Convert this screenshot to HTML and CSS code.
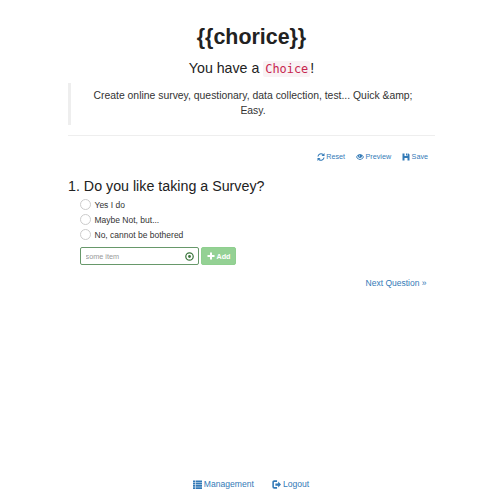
FILE: index.html
```
<!DOCTYPE html>
<html lang="en">
<head>
<meta charset="utf-8">
<title>{{chorice}}</title>
<link rel="stylesheet" href="styles.css">
</head>
<body>
<main class="container">
  <header class="intro">
    <h1>{{chorice}}</h1>
    <h2>You have a <code>Choice</code>!</h2>
    <blockquote>Create online survey, questionary, data collection, test... Quick &amp;amp; Easy.</blockquote>
  </header>
  <nav class="toolbar">
    <a href="#"><svg class="icon" viewBox="0 0 16 16"><path d="M2 7a6 6 0 0 1 10-4M14 9A6 6 0 0 1 4 13" fill="none" stroke="currentColor" stroke-width="2.2"/><path d="M15 0v6H9zM1 16v-6h6z"/></svg><span>Reset</span></a>
    <a href="#"><svg class="icon" viewBox="0 0 16 16"><path fill-rule="evenodd" d="M0 8Q3.500 2 8 2T16 8Q12.500 14 8 14T0 8zM2 8Q4 12 8 12T14 8Q13 6 11.800 5A4 4 0 1 1 4.200 5Q3 6 2 8zM6 5v2h2V5z"/></svg><span>Preview</span></a>
    <a href="#"><svg class="icon" viewBox="0 0 16 16"><path d="M1 1h4v5h6V1h2l2 2v12h-4V10H5v5H1zM8 1h2v4H8z"/></svg><span>Save</span></a>
  </nav>
  <section class="question">
    <h3>1. Do you like taking a Survey?</h3>
    <div class="options">
      <label><input type="radio" name="answer"><span>Yes I do</span></label>
      <label><input type="radio" name="answer"><span>Maybe Not, but...</span></label>
      <label><input type="radio" name="answer"><span>No, cannot be bothered</span></label>
    </div>
    <form class="add-item">
      <div class="field"><input type="text" placeholder="some item"><svg class="record" viewBox="0 0 16 16"><circle cx="8" cy="8" r="6.600" fill="none" stroke="currentColor" stroke-width="2.200"/><circle cx="8" cy="8" r="2.500"/></svg></div>
      <button type="button"><svg class="icon" viewBox="0 0 16 16"><path d="M6 1h4v5h5v4h-5v5H6v-5H1V6h5z"/></svg><span>Add</span></button>
    </form>
  </section>
  <div class="next"><a href="#">Next Question »</a></div>
  <footer>
    <a href="#"><svg class="icon" viewBox="0 0 16 16"><path d="M0 1h4v3H0zM5 1h11v3H5zM0 5h4v3H0zM5 5h11v3H5zM0 9h4v3H0zM5 9h11v3H5zM0 13h4v3H0zM5 13h11v3H5z"/></svg><span>Management</span></a>
    <a href="#"><svg class="icon" viewBox="0 0 16 16"><path d="M9 2H4Q2 2 2 4v8q0 2 2 2h5" fill="none" stroke="currentColor" stroke-width="2.800"/><path d="M6 6h5V2.500L16 8l-5 5.500V10H6z"/></svg><span>Logout</span></a>
  </footer>
</main>
</body>
</html>
```
FILE: styles.css
```
* { box-sizing: border-box; }
body {
  margin: 0;
  background: #fff;
  color: #333;
  font-family: "Liberation Sans", Arial, sans-serif;
  font-size: 8.5px;
}
a { color: #337ab7; text-decoration: none; }
svg { fill: currentColor; }
.container {
  width: 368px;
  height: 500px;
  margin: 0 auto 0 68px;
  display: flex;
  flex-direction: column;
}
.intro {
  height: 136px;
  width: 367px;
  border-bottom: 1px solid #eee;
  text-align: center;
}
h1, h2, h3 { margin: 0; font-weight: 400; color: #222; }
h1 { padding-top: 24px; font-size: 21.4px; line-height: 27px; font-weight: 700; }
h2 { margin-top: 9px; font-size: 14.2px; line-height: 17px; }
code {
  padding: 1px 2px;
  border-radius: 2px;
  background: #f9f2f4;
  color: #c7254e;
  font-family: "DejaVu Sans Mono", monospace;
  font-size: 11.9px;
}
blockquote {
  margin: 5px 0 0;
  height: 42px;
  padding: 5px 12px;
  border-left: 3px solid #eee;
  font-size: 10.4px;
  line-height: 15px;
}
.toolbar {
  display: flex;
  justify-content: flex-end;
  gap: 11px;
  padding: 16px 8px 0 0;
  line-height: 10px;
  font-size: 7.2px;
}
.toolbar a, footer a, button { display: flex; align-items: center; gap: 1px; }
.icon { width: 8px; height: 8px; }
.toolbar a { gap: 1.500px; }
.question { margin-top: 16px; }
h3 { font-size: 14.25px; line-height: 17px; }
.options { padding: 2px 0 0 11.500px; }
.options label { display: flex; align-items: center; gap: 4px; height: 15px; }
.options input {
  appearance: none;
  width: 11px;
  height: 11px;
  margin: 0;
  border: 1px solid #ccc;
  border-radius: 50%;
}
.add-item { display: flex; gap: 2px; margin: 5px 0 0 11.500px; }
.field {
  display: flex;
  align-items: center;
  width: 119.500px;
  height: 18px;
  padding: 0 4px 0 5px;
  border: 1px solid #67986a;
  border-radius: 2px;
  color: #3c763d;
}
.field input {
  flex: 1;
  min-width: 0;
  padding: 0;
  border: 0;
  outline: 0;
  background: none;
  font: 7.3px "Liberation Sans", Arial, sans-serif;
}
.field input::placeholder { color: #999; }
.record { width: 9px; height: 9px; }
button {
  width: 35px;
  height: 18px;
  padding: 0;
  justify-content: center;
  gap: 2px;
  border: 1px solid #8fcf8f;
  border-radius: 2px;
  background: #94d194;
  color: #fff;
  font: 700 7.2px "Liberation Sans", Arial, sans-serif;
}
.next { margin-top: 13px; padding-right: 9.500px; text-align: right; line-height: 11px; }
footer {
  display: flex;
  justify-content: center;
  gap: 18px;
  margin-top: auto;
  padding: 0 2px 10px 0;
  font-size: 8.6px;
  line-height: 11px;
}
footer a { gap: 2px; }
footer .icon { width: 9px; height: 9px; }
```
